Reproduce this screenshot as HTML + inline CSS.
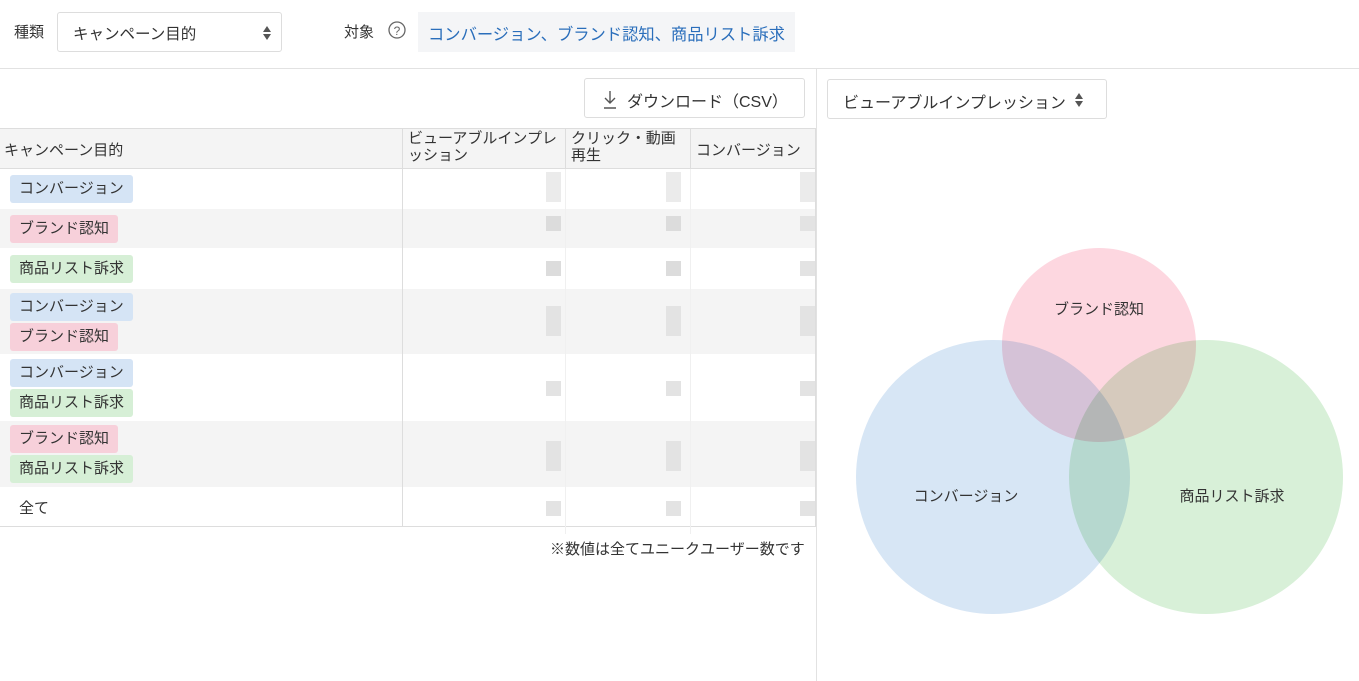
<!DOCTYPE html>
<html><head><meta charset="utf-8"><style>
*{box-sizing:border-box;margin:0;padding:0}
body{width:1359px;height:681px;overflow:hidden;background:#fff;font-family:"Liberation Sans","Noto Sans CJK JP",sans-serif;color:#333;font-size:15px;position:relative}
.a{position:absolute}
.sel{border:1px solid #ddd;border-radius:3px;background:#fff}
.tag{position:absolute;left:10px;height:28px;line-height:28px;padding:0 9px;border-radius:3px;font-size:15px;color:#333}
.b{background:#d5e4f5}.p{background:#f7d0da}.g{background:#d6efd6}
.row{position:absolute;left:0;width:816px}
.gr{background:#f4f4f4}
.sq{position:absolute;width:15px;background:#e3e3e3}
</style></head><body>
<div class="a" style="left:14px;top:21px">種類</div>
<div class="a sel" style="left:57px;top:12px;width:225px;height:40px"><span class="a" style="left:15px;top:9px;font-size:15.5px">キャンペーン目的</span>
<svg class="a" style="left:203px;top:11px" width="12" height="18"><path d="M6 2 L10 8 L2 8Z M6 16 L10 10 L2 10Z" fill="#555"/></svg></div>
<div class="a" style="left:344px;top:21px">対象</div>
<svg class="a" style="left:387px;top:20px" width="20" height="20"><circle cx="10" cy="10" r="8" fill="none" stroke="#666" stroke-width="1.3"/><text x="10" y="15" font-size="12" text-anchor="middle" fill="#666" font-family="Liberation Sans">?</text></svg>
<div class="a" style="left:418px;top:12px;width:377px;height:40px;background:#f4f5f7;color:#2a6ebb;padding:9px 0 0 10px;font-size:16.3px;white-space:nowrap">コンバージョン、ブランド認知、商品リスト訴求</div>
<div class="a" style="left:0;top:68px;width:1359px;height:1px;background:#e2e2e2"></div>
<div class="a" style="left:816px;top:68px;width:1px;height:613px;background:#e2e2e2"></div>
<div class="a sel" style="left:584px;top:78px;width:221px;height:40px"><svg class="a" style="left:17px;top:11px" width="16" height="20"><path d="M8 1 V13 M3 8 L8 13 L13 8 M2 18 H14" fill="none" stroke="#555" stroke-width="1.4"/></svg><span class="a" style="left:42px;top:9px;font-size:16px">ダウンロード（CSV）</span></div>
<div class="a sel" style="left:827px;top:79px;width:280px;height:40px"><span class="a" style="left:15px;top:9px;font-size:16px">ビューアブルインプレッション</span><svg class="a" style="left:245px;top:11px" width="12" height="18"><path d="M6 2 L10 8 L2 8Z M6 16 L10 10 L2 10Z" fill="#555"/></svg></div>
<div class="row" style="top:128px;height:41px;background:#f4f4f4;border-top:1px solid #ddd;border-bottom:1px solid #ddd"></div>
<div class="a" style="left:4px;top:139px">キャンペーン目的</div>
<div class="a" style="left:408px;top:130px;line-height:17px">ビューアブルインプレ<br>ッション</div>
<div class="a" style="left:571px;top:130px;line-height:17px">クリック・動画<br>再生</div>
<div class="a" style="left:696px;top:139px">コンバージョン</div>
<div class="row gr" style="top:209px;height:39px"></div>
<div class="row gr" style="top:289px;height:65px"></div>
<div class="row gr" style="top:421px;height:66px"></div>
<div class="row" style="top:526px;height:1px;background:#ddd"></div>
<div class="a" style="left:402px;top:128px;width:1px;height:398px;background:#ddd"></div>
<div class="a" style="left:565px;top:128px;width:1px;height:41px;background:#ddd"></div>
<div class="a" style="left:690px;top:128px;width:1px;height:41px;background:#ddd"></div>
<div class="a" style="left:565px;top:169px;width:1px;height:365px;background:#f0f0f0"></div>
<div class="a" style="left:690px;top:169px;width:1px;height:365px;background:#f0f0f0"></div>
<div class="a" style="left:815px;top:128px;width:1px;height:398px;background:#ddd"></div>
<div class="tag b" style="top:175px">コンバージョン</div>
<div class="tag p" style="top:215px">ブランド認知</div>
<div class="tag g" style="top:255px">商品リスト訴求</div>
<div class="tag b" style="top:293px">コンバージョン</div>
<div class="tag p" style="top:323px">ブランド認知</div>
<div class="tag b" style="top:359px">コンバージョン</div>
<div class="tag g" style="top:389px">商品リスト訴求</div>
<div class="tag p" style="top:425px">ブランド認知</div>
<div class="tag g" style="top:455px">商品リスト訴求</div>
<div class="a" style="left:19px;top:497px">全て</div>
<div class="sq" style="left:546px;top:172px;height:30px;background:#ebebeb"></div><div class="sq" style="left:666px;top:172px;height:30px;background:#ebebeb"></div><div class="sq" style="left:800px;top:172px;height:30px;background:#ebebeb"></div>
<div class="sq" style="left:546px;top:216px;height:15px;background:#dcdcdc"></div><div class="sq" style="left:666px;top:216px;height:15px;background:#dcdcdc"></div><div class="sq" style="left:800px;top:216px;height:15px"></div>
<div class="sq" style="left:546px;top:261px;height:15px;background:#dcdcdc"></div><div class="sq" style="left:666px;top:261px;height:15px;background:#dcdcdc"></div><div class="sq" style="left:800px;top:261px;height:15px"></div>
<div class="sq" style="left:546px;top:306px;height:30px"></div><div class="sq" style="left:666px;top:306px;height:30px"></div><div class="sq" style="left:800px;top:306px;height:30px"></div>
<div class="sq" style="left:546px;top:381px;height:15px"></div><div class="sq" style="left:666px;top:381px;height:15px"></div><div class="sq" style="left:800px;top:381px;height:15px"></div>
<div class="sq" style="left:546px;top:441px;height:30px"></div><div class="sq" style="left:666px;top:441px;height:30px"></div><div class="sq" style="left:800px;top:441px;height:30px"></div>
<div class="sq" style="left:546px;top:501px;height:15px"></div><div class="sq" style="left:666px;top:501px;height:15px"></div><div class="sq" style="left:800px;top:501px;height:15px"></div>
<div class="a" style="left:550px;top:538px;font-size:15px;white-space:nowrap">※数値は全てユニークユーザー数です</div>
<svg class="a" style="left:0;top:0" width="1359" height="681">
<circle cx="993" cy="477" r="137" fill="#d7e6f5" style="mix-blend-mode:multiply"/>
<circle cx="1206" cy="477" r="137" fill="#d8f0d8" style="mix-blend-mode:multiply"/>
<circle cx="1099" cy="345" r="97" fill="#fdd7e0" style="mix-blend-mode:multiply"/>
<g font-family="Liberation Sans,Noto Sans CJK JP,sans-serif" font-size="15" fill="#333" text-anchor="middle">
<text x="1099" y="314">ブランド認知</text>
<text x="966" y="501">コンバージョン</text>
<text x="1232" y="501">商品リスト訴求</text>
</g></svg>
</body></html>
